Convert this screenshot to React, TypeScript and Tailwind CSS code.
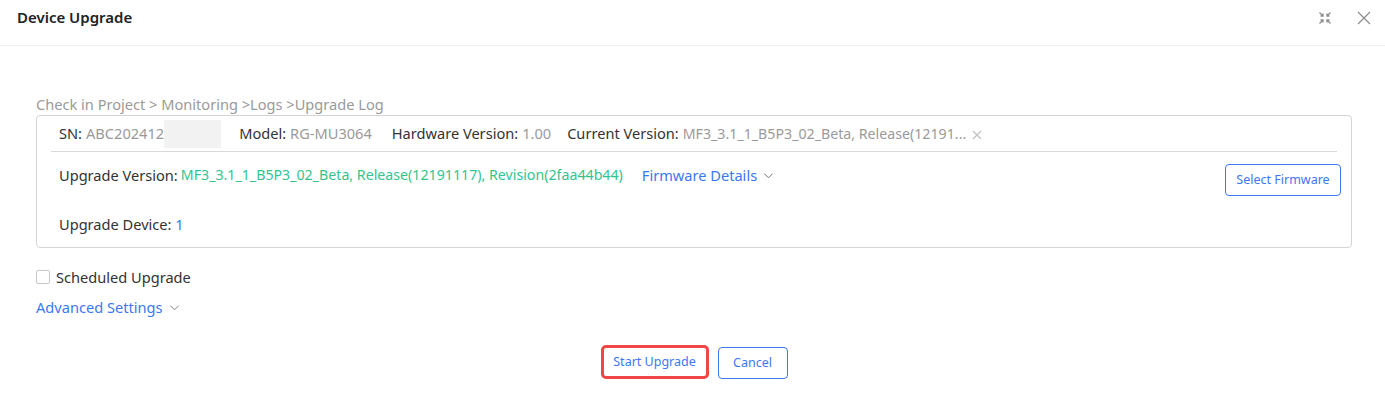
import React from 'react';

const font = { fontFamily: '"Noto Sans", "Open Sans", sans-serif' };

const Chevron = ({ className = '' }: { className?: string }) => (
  <svg viewBox="0 0 12 12" className={className} fill="none" stroke="currentColor" strokeWidth="1">
    <path d="M1.5 4 6 8.5 10.5 4" />
  </svg>
);

const App = () => {
  return (
    <div className="h-[398px] w-[1385px] bg-white text-[14.6px] text-[#333]" style={font}>
      {/* header */}
      <div className="flex h-[46px] items-center justify-between border-b border-[#f0f0f0] pl-[17px] pr-[14px]">
        <div className="-mt-[10px] text-[15px] font-semibold text-[#222]">Device Upgrade</div>
        <div className="-mt-[10px] flex items-center gap-[25px] text-[#8c8c8c]">
          <svg viewBox="0 0 14 14" className="h-[14px] w-[14px]" fill="none" stroke="currentColor" strokeWidth="1.3">
            <path d="M1.5 1.5 5 5M5 2.5V5H2.5" />
            <path d="M12.5 1.5 9 5M9 2.5V5h2.5" />
            <path d="M1.5 12.5 5 9M5 11.5V9H2.5" />
            <path d="M12.5 12.5 9 9M9 11.5V9h2.5" />
          </svg>
          <svg viewBox="0 0 14 14" className="h-[14px] w-[14px]" fill="none" stroke="currentColor" strokeWidth="1.2">
            <path d="M1 1l12 12M13 1 1 13" />
          </svg>
        </div>
      </div>

      <div className="pl-[36px] pr-[33px]">
        <div className="mt-[48px] leading-[20px] text-[#9a9a9a]">Check in Project &gt; Monitoring &gt;Logs &gt;Upgrade Log</div>

        <div className="mt-px rounded-[4px] border border-[#d4d4d4] px-[14px]">
          <div className="flex h-[36px] items-center border-b border-[#d9d9d9] pl-[8px]">
            <span>SN:</span>
            <span className="ml-[4px] text-[#9a9a9a]">ABC202412</span>
            <span className="h-[28px] w-[57px] bg-[#f2f2f2]" />
            <span className="ml-[18px]">Model:</span>
            <span className="ml-[4px] text-[#9a9a9a]">RG-MU3064</span>
            <span className="ml-[20px]">Hardware Version:</span>
            <span className="ml-[4px] text-[#9a9a9a]">1.00</span>
            <span className="ml-[16px]">Current Version:</span>
            <span className="ml-[4px] text-[14.2px] text-[#9a9a9a]">MF3_3.1_1_B5P3_02_Beta, Release(12191...</span>
            <svg viewBox="0 0 10 10" className="ml-[6px] mt-[3px] h-[10px] w-[10px] text-[#c4c4c4]" fill="none" stroke="currentColor" strokeWidth="1.4">
              <path d="M1 1l8 8M9 1 1 9" />
            </svg>
          </div>

          <div className="pb-[12px] pl-[8px]">
            <div className="mt-[12px] flex items-start justify-between">
              <div className="flex items-center leading-[22px]">
                <span>Upgrade Version:</span>
                <span className="ml-[3px] text-[14.2px] text-[#33c48e]">MF3_3.1_1_B5P3_02_Beta, Release(12191117), Revision(2faa44b44)</span>
                <span className="ml-[19px] text-[#3b78f2]">Firmware Details</span>
                <Chevron className="ml-[6px] h-[11px] w-[11px] text-[#666]" />
              </div>
              <button className="-mr-[4px] h-[32px] w-[116px] rounded-[4px] border border-[#3b78f2] text-[12.5px] text-[#3b78f2]">
                Select Firmware
              </button>
            </div>
            <div className="mt-[17px] leading-[22px]">
              Upgrade Device: <span className="text-[#3b78f2]">1</span>
            </div>
          </div>
        </div>

        <label className="mt-[19px] flex items-center leading-[20px]">
          <span className="h-[14px] w-[14px] rounded-[2px] border border-[#c8c8c8] bg-white" />
          <span className="ml-[6px]">Scheduled Upgrade</span>
        </label>

        <div className="mt-[10px] flex items-center leading-[20px] text-[#3b78f2]">
          <span>Advanced Settings</span>
          <Chevron className="ml-[7px] h-[11px] w-[11px] text-[#777]" />
        </div>

        <div className="mt-[28px] flex justify-center gap-[9px]">
          <button className="h-[34px] w-[108px] rounded-[5px] border-[3px] border-[#f04646] text-[12.5px] text-[#3b78f2]">
            Start Upgrade
          </button>
          <button className="mt-[2px] h-[32px] w-[70px] rounded-[4px] border border-[#3b78f2] text-[12.5px] text-[#3b78f2]">
            Cancel
          </button>
        </div>
      </div>
    </div>
  );
};

export default App;
